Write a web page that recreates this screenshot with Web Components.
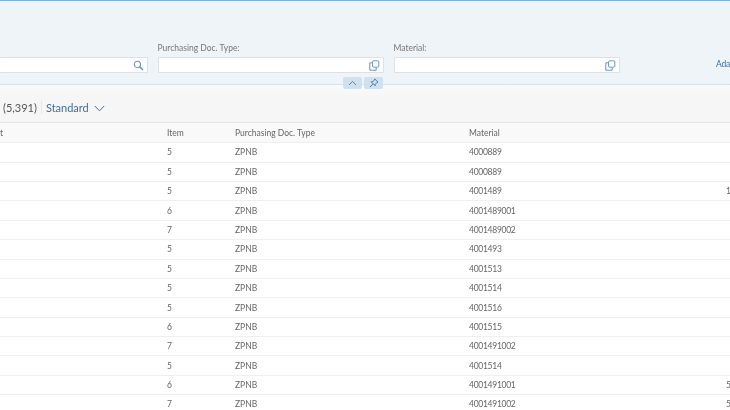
<!doctype html>
<html>
<head>
<meta charset="utf-8">
<title>Purchase order items</title>
<style>
  html, body { margin: 0; height: 100%; overflow: hidden; background: #fff; }
  body { font: 8.5px "Lato", "Open Sans", sans-serif; color: #555; }
  /* source is an upscaled capture, so everything is a touch soft */
  #app { display: flex; flex-direction: column; height: 410px; width: 730px; overflow: hidden; filter: blur(.55px); }
</style>
</head>
<body>
<div id="app">
  <filter-bar>
    <filter-field style="width:148px" icon="search" open-left></filter-field>
    <filter-field style="width:226.5px" label="Purchasing Doc. Type:" icon="copy"></filter-field>
    <filter-field style="width:226.5px" label="Material:" icon="copy"></filter-field>
    <span slot="action">Ada</span>
  </filter-bar>
  <table-toolbar count="(5,391)" variant="Standard"></table-toolbar>
  <item-table>
    <item-row kind="head" a="t" b="Item" c="Purchasing Doc. Type" d="Material"></item-row>
    <item-row b="5" c="ZPNB" d="4000889"></item-row>
    <item-row b="5" c="ZPNB" d="4000889"></item-row>
    <item-row b="5" c="ZPNB" d="4001489" e="1"></item-row>
    <item-row b="6" c="ZPNB" d="4001489001"></item-row>
    <item-row b="7" c="ZPNB" d="4001489002"></item-row>
    <item-row b="5" c="ZPNB" d="4001493"></item-row>
    <item-row b="5" c="ZPNB" d="4001513"></item-row>
    <item-row b="5" c="ZPNB" d="4001514"></item-row>
    <item-row b="5" c="ZPNB" d="4001516"></item-row>
    <item-row b="6" c="ZPNB" d="4001515"></item-row>
    <item-row b="7" c="ZPNB" d="4001491002"></item-row>
    <item-row b="5" c="ZPNB" d="4001514"></item-row>
    <item-row b="6" c="ZPNB" d="4001491001" e="5"></item-row>
    <item-row b="7" c="ZPNB" d="4001491002" e="5"></item-row>
  </item-table>
</div>

<script>
const ICONS = {
  search: '<svg width="11" height="11" viewBox="0 0 11 11" fill="none" stroke="#6b93b8" stroke-width="1.1"><circle cx="4.4" cy="4.4" r="3.1"/><path d="M6.8 6.8 10 10" stroke-width="1.7"/></svg>',
  copy: '<svg width="11" height="11" viewBox="0 0 11 11" fill="none" stroke="#6b93b8" stroke-width="1"><path d="M3 2.8H.8v7.4h6.4V8"/><rect x="3.6" y=".8" width="6.2" height="6.4" rx="1"/></svg>',
  up: '<svg width="9" height="6" viewBox="0 0 9 6" fill="none" stroke="#5f87ab" stroke-width="1"><path d="M1 5 4.5 1.4 8 5"/></svg>',
  pin: '<svg width="10" height="10" viewBox="0 0 10 10" fill="none" stroke="#4f7ba3" stroke-width="1"><path d="M5.8 1 9 4.2 7.8 4.6 6.4 6.2 6.2 7.8 2.2 3.8 3.8 3.6 5.4 2.2zM3.9 6.1 1 9"/></svg>',
  down: '<svg width="11" height="7" viewBox="0 0 11 7" fill="none" stroke="#3f6f9c" stroke-width="1"><path d="M.8 1 5.5 5.8 10.2 1"/></svg>'
};

class FilterBar extends HTMLElement {
  constructor() {
    super();
    this.attachShadow({ mode: 'open' }).innerHTML = `
      <style>
        :host{display:block;position:relative;flex:none;height:85px;box-sizing:border-box;
          background:#eff4f9;border-top:1px solid #7fb0d6;border-bottom:1px solid #d5e3ef;overflow:visible;}
        .fields{display:flex;align-items:flex-end;gap:9.5px;height:72px;box-sizing:border-box;}
        .action{margin-left:auto;height:16px;line-height:15px;color:#3f6f9c;letter-spacing:-.25px;white-space:nowrap;}
        .btns{position:absolute;left:343px;top:76px;display:flex;gap:2px;z-index:1;}
        .btn{width:19px;height:12px;border-radius:2px;background:#cfe0ee;display:flex;align-items:center;justify-content:center;}
      </style>
      <div class="fields"><slot></slot><div class="action"><slot name="action"></slot></div></div>
      <div class="btns"><div class="btn">${ICONS.up}</div><div class="btn">${ICONS.pin}</div></div>`;
  }
}

class FilterField extends HTMLElement {
  constructor() {
    super();
    this.attachShadow({ mode: 'open' });
  }
  connectedCallback() {
    const label = this.getAttribute('label');
    const icon = ICONS[this.getAttribute('icon')] || '';
    const open = this.hasAttribute('open-left');
    this.shadowRoot.innerHTML = `
      <style>
        :host{display:block;flex:none;color:#777;}
        .label{height:15px;line-height:12px;white-space:nowrap;}
        .box{height:14px;background:#fff;border:1px solid #dde1e4;border-radius:1px;${open ? 'border-left:0;' : ''}
          display:flex;align-items:center;justify-content:flex-end;padding-right:3px;}
        svg{display:block;}
      </style>
      ${label ? `<div class="label">${label}</div>` : ''}
      <div class="box">${icon}</div>`;
  }
}

class TableToolbar extends HTMLElement {
  constructor() {
    super();
    this.attachShadow({ mode: 'open' });
  }
  connectedCallback() {
    this.shadowRoot.innerHTML = `
      <style>
        :host{display:flex;flex:none;align-items:center;height:38px;box-sizing:border-box;padding:8px 0 0 3px;
          background:linear-gradient(#fafafa,#f6f6f6 30%);border-bottom:1px solid #e4e4e4;font-size:11px;}
        .count{color:#555;padding-right:4px;border-right:1px solid #e6e6e6;line-height:13px;height:13px;}
        .variant{color:#3f6f9c;margin-left:4px;margin-right:5px;}
        svg{display:block;margin-top:1px;}
      </style>
      <span class="count">${this.getAttribute('count')}</span>
      <span class="variant">${this.getAttribute('variant')}</span>${ICONS.down}`;
  }
}

class ItemTable extends HTMLElement {
  constructor() {
    super();
    this.attachShadow({ mode: 'open' }).innerHTML = `
      <style>:host{display:block;flex:1;min-height:0;overflow:hidden;background:#fff;}</style>
      <slot></slot>`;
  }
}

class ItemRow extends HTMLElement {
  constructor() {
    super();
    this.attachShadow({ mode: 'open' });
  }
  connectedCallback() {
    const cell = (k) => `<div class="${k}">${this.getAttribute(k) || ''}</div>`;
    const head = this.getAttribute('kind') === 'head';
    this.shadowRoot.innerHTML = `
      <style>
        :host{display:grid;grid-template-columns:167px 68px 234px 257px 4px;align-items:center;
          box-sizing:border-box;height:${head ? '20.2px' : '19.4px'};border-bottom:1px solid #efefef;white-space:nowrap;
          background:${head ? '#f9f9f9' : '#fff'};color:#666;}
        div{overflow:hidden;}
        .d{letter-spacing:${head ? '0' : '-.28px'};}
      </style>
      ${['a', 'b', 'c', 'd', 'e'].map(cell).join('')}`;
  }
}

customElements.define('filter-bar', FilterBar);
customElements.define('filter-field', FilterField);
customElements.define('table-toolbar', TableToolbar);
customElements.define('item-table', ItemTable);
customElements.define('item-row', ItemRow);
</script>
</body>
</html>
